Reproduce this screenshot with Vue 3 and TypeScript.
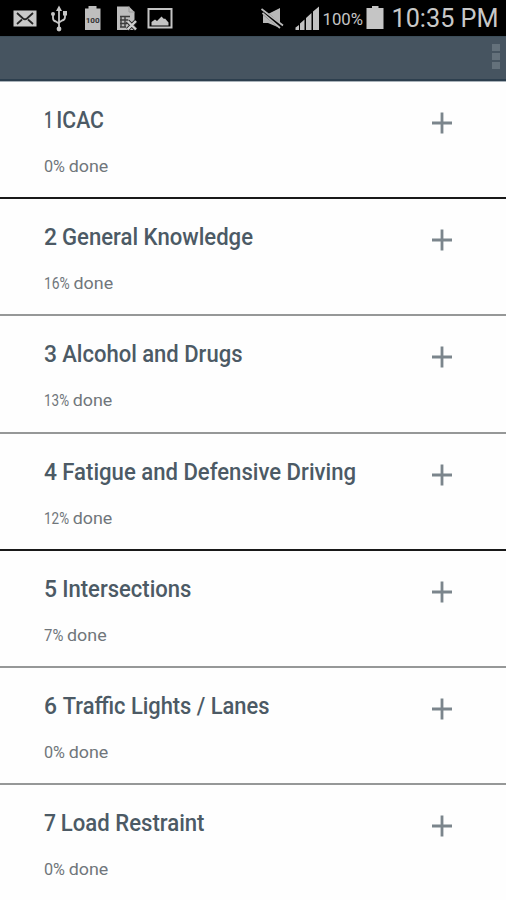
<script setup lang="ts">
interface Topic {
  number: number
  numberWidth: number
  title: string
  titleX: number
  titleEnd: number
  percent: number
  doneX: number
  divider: 'dark' | 'grey' | 'none'
}

const topics: Topic[] = [
  { number: 1, numberWidth: 9, title: 'ICAC', titleX: 12.3, titleEnd: 60, percent: 0, doneX: 24.7, divider: 'dark' },
  { number: 2, numberWidth: 13, title: 'General Knowledge', titleX: 18, titleEnd: 209, percent: 16, doneX: 29.5, divider: 'grey' },
  { number: 3, numberWidth: 13, title: 'Alcohol and Drugs', titleX: 18.2, titleEnd: 198.5, percent: 13, doneX: 28.7, divider: 'grey' },
  { number: 4, numberWidth: 13, title: 'Fatigue and Defensive Driving', titleX: 18.3, titleEnd: 312, percent: 12, doneX: 28.7, divider: 'dark' },
  { number: 5, numberWidth: 13, title: 'Intersections', titleX: 18.2, titleEnd: 147.5, percent: 7, doneX: 23, divider: 'grey' },
  { number: 6, numberWidth: 13, title: 'Traffic Lights / Lanes', titleX: 18.8, titleEnd: 225.5, percent: 0, doneX: 24.7, divider: 'grey' },
  { number: 7, numberWidth: 12, title: 'Load Restraint', titleX: 16.8, titleEnd: 160.5, percent: 0, doneX: 24.7, divider: 'none' },
]
</script>

<template>
  <div class="screen">
    <header class="status">
      <svg class="icons" width="180" height="36" viewBox="0 0 180 36">
        <rect x="13.5" y="10.5" width="23" height="16" fill="#c9c9c9" />
        <path d="M17 13 L23 18.5 Q25 20 27 18.5 L33 13 M17 24 L22 19.5 M33 24 L28 19.5" fill="none" stroke="#242424" stroke-width="1.8" />
        <g fill="none" stroke="#c5c5c5" stroke-width="1.8">
          <path d="M59 9 V29 M53 14 V18 Q53 21 56 21.5 L59 23.5 M65 13 V17 Q65 20 62 20.5 L59 22.5" />
        </g>
        <path d="M59 5.5 L62 11 H56 Z M63 11 H67 V15.5 H63 Z" fill="#c5c5c5" />
        <circle cx="53" cy="14" r="2" fill="#c5c5c5" />
        <circle cx="59" cy="29" r="2.4" fill="#c5c5c5" />
        <path d="M88.5 6 H96.5 V8.5 H100.5 V30 H85 V8.5 H88.5 Z" fill="#bebebe" />
        <text class="mini" x="85.7" y="22.5" textLength="14" lengthAdjust="spacingAndGlyphs">100</text>
        <path d="M117 6.5 H129 L134.5 12 V30 H117 Z" fill="#bdbdbd" />
        <path d="M129 6.5 V12 H134.5" fill="none" stroke="#999" />
        <path d="M120 16.5 H130 M120 20 H128 M120 23.5 H127 M120 27 H126 M121 16 V27 M125 16 V27" fill="none" stroke="#3d3d3d" stroke-width="1.4" />
        <path d="M127.5 21 L136 29.5 M136 21 L127.5 29.5" stroke="#222" stroke-width="4" />
        <path d="M127.5 21 L136 29.5 M136 21 L127.5 29.5" stroke="#d0d0d0" stroke-width="2.4" />
        <rect x="148.5" y="9" width="23" height="18.5" fill="none" stroke="#c4c4c4" stroke-width="2" />
        <path d="M151.5 25.5 V22 L155 19.5 L157 21 L161.5 16.5 L164 19 L165 18.5 L168.5 22.5 V25.5 Z" fill="#c4c4c4" />
      </svg>
      <svg class="icons" width="256" height="36" viewBox="250 0 256 36">
        <path d="M263 14 H268 L280 8 V28 L268 23 H263 Z" fill="#b8b8b8" />
        <path d="M261.5 10.5 L282 27.5" stroke="#000" stroke-width="4.6" />
        <path d="M261.5 9 L283 25.5 M262.5 13 L280 28" stroke="#bababa" stroke-width="1.7" />
        <path d="M295.5 30 V27.5 L299 25 V30 Z M300 30 V23.5 L304.5 19.5 V30 Z M306 30 V18 L311.5 13 V30 Z M313 30 V11.5 L319 6.5 V30 Z" fill="#c2c2c2" />
        <text class="battery" x="322.5" y="25.2" textLength="40.5" lengthAdjust="spacingAndGlyphs">100%</text>
        <path d="M372 6 H378.5 V8 H383.5 V29 H366.5 V8 H372 Z" fill="#c5c5c5" />
        <text class="clock" x="391.5" y="26.7" textLength="107" lengthAdjust="spacingAndGlyphs">10:35 PM</text>
      </svg>
    </header>
    <nav class="bar">
      <div class="menu"><i></i><i></i><i></i></div>
    </nav>
    <main class="list">
      <section v-for="topic in topics" :key="topic.number" class="topic" :class="topic.divider">
        <div class="copy">
          <svg class="title" width="330" height="30">
            <text x="0" y="22.3" :textLength="topic.numberWidth" lengthAdjust="spacingAndGlyphs">{{ topic.number }}</text>
            <text :x="topic.titleX" y="22.3" :textLength="topic.titleEnd - topic.titleX" lengthAdjust="spacingAndGlyphs">{{ topic.title }}</text>
          </svg>
          <svg class="done" width="120" height="24">
            <text x="0" y="18.2" :textLength="topic.doneX - 3.7" lengthAdjust="spacingAndGlyphs">{{ topic.percent }}%</text>
            <text :x="topic.doneX" y="18.2" textLength="39.6" lengthAdjust="spacingAndGlyphs">done</text>
          </svg>
        </div>
        <svg class="plus" width="22" height="22" viewBox="0 0 22 22">
          <path d="M1 11 H21 M11 .5 V21.5" fill="none" stroke="#7b858c" stroke-width="2.8" />
        </svg>
      </section>
    </main>
  </div>
</template>

<style>
body {
  margin: 0;
  background: #fefefe;
}
</style>

<style scoped>
.screen {
  width: 506px;
  height: 900px;
  overflow: hidden;
  background: #fefefe;
  font-family: Roboto, "Liberation Sans", sans-serif;
}
svg {
  display: block;
}
.status {
  display: flex;
  justify-content: space-between;
  height: 36px;
  background: #000;
}
.mini {
  font-size: 8px;
  font-weight: 700;
  fill: #333;
}
.battery {
  font-size: 17px;
  fill: #c4c4c4;
}
.clock {
  font-size: 25px;
  fill: #c8c8c8;
}
.bar {
  display: flex;
  justify-content: flex-end;
  box-sizing: border-box;
  height: 45px;
  padding: 7px 6px 0 0;
  background: #465460;
  border-top: 1px solid #3c4d59;
  border-bottom: 2px solid #2d3f4e;
}
.menu {
  display: flex;
  flex-direction: column;
  gap: 2px;
}
.menu i {
  width: 8px;
  height: 7px;
  background: #64717b;
}
.list {
  border-top: 1px solid #a9b2b9;
}
.topic {
  display: flex;
  justify-content: space-between;
  box-sizing: border-box;
  height: 117.2px;
  padding: 24px 53px 0 43.5px;
  border-bottom: 2px solid transparent;
}
.topic.dark {
  border-bottom-color: #191919;
}
.topic.grey {
  border-bottom-color: #969898;
}
.title {
  font-size: 23px;
  font-weight: 500;
  fill: #4c5a65;
}
.done {
  margin-top: 18px;
  font-size: 16.5px;
  fill: #70767b;
}
.plus {
  margin-top: 6px;
}
</style>
